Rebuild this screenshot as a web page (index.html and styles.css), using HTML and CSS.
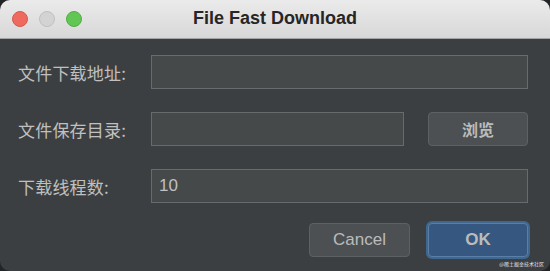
FILE: index.html
```html
<!DOCTYPE html>
<html lang="zh-CN">
<head>
    <meta charset="UTF-8">
    <meta name="viewport" content="width=device-width, initial-scale=1.0">
    <title>File Fast Download</title>
    <link rel="stylesheet" href="styles.css">
</head>
<body>
    <div class="window">
        <div class="titlebar">
            <div class="lights">
                <span class="light close"></span>
                <span class="light min"></span>
                <span class="light max"></span>
            </div>
            <div class="title">File Fast Download</div>
        </div>

        <div class="content">
            <div class="row">
                <label class="label" for="url">文件下载地址:</label>
                <input class="field" id="url" type="text">
            </div>
            <div class="row">
                <label class="label" for="dir">文件保存目录:</label>
                <div class="field-group">
                    <input class="field" id="dir" type="text">
                    <button class="btn browse">浏览</button>
                </div>
            </div>
            <div class="row">
                <label class="label" for="threads">下载线程数:</label>
                <input class="field" id="threads" type="text" value="10">
            </div>

            <div class="actions">
                <button class="btn cancel">Cancel</button>
                <button class="btn ok">OK</button>
            </div>
        </div>

        <div class="watermark">@稀土掘金技术社区</div>
    </div>
</body>
</html>
```

FILE: styles.css
```css
body {
    margin: 0;
    padding: 0;
    background-color: #232425;
    font-family: "Liberation Sans", Arial, "Noto Sans CJK SC", sans-serif;
}

.window {
    position: relative;
    width: 550px;
    height: 271px;
    display: flex;
    flex-direction: column;
    background-color: #3c3f41;
    border-radius: 10px;
    overflow: hidden;
}

.titlebar {
    position: relative;
    height: 38px;
    flex-shrink: 0;
    display: flex;
    align-items: center;
    justify-content: center;
    background: linear-gradient(#ebebeb, #d8d8d8);
    border-bottom: 1px solid #a3a3a3;
}

.lights {
    position: absolute;
    left: 12px;
    top: 11px;
    display: flex;
    gap: 11px;
}

.light {
    width: 16px;
    height: 16px;
    border-radius: 50%;
    box-sizing: border-box;
}

.light.close {
    background-color: #ee6a5f;
    border: 1px solid #d9574d;
}

.light.min {
    background-color: #d3d3d3;
    border: 1px solid #c0c0c0;
}

.light.max {
    background-color: #62c655;
    border: 1px solid #52ad45;
}

.title {
    font-size: 18px;
    font-weight: bold;
    color: #262626;
    margin-top: -1px;
}

.content {
    flex: 1;
    display: flex;
    flex-direction: column;
    gap: 23px;
    padding: 16px 22px 0 18px;
}

.row {
    display: flex;
    align-items: center;
    height: 34px;
}

.label {
    width: 133px;
    flex-shrink: 0;
    font-family: "Noto Sans CJK SC", sans-serif;
    font-size: 17px;
    letter-spacing: 0.2px;
    color: #c0c0c0;
}

.field {
    flex: 1;
    height: 34px;
    box-sizing: border-box;
    background-color: #45494a;
    border: 1px solid #686b6d;
    padding: 0 7px;
    font-family: "Liberation Sans", Arial, sans-serif;
    font-size: 17px;
    color: #c0c0c0;
    outline: none;
}

.field-group {
    flex: 1;
    display: flex;
    gap: 24px;
}

.btn {
    width: 100px;
    height: 34px;
    box-sizing: border-box;
    background-color: #4c5052;
    border: 1px solid #5e6163;
    border-radius: 4px;
    color: #bbbbbb;
    font-family: "Liberation Sans", Arial, sans-serif;
    font-size: 17px;
    padding: 0;
}

.btn.browse {
    font-family: "Noto Sans CJK SC", sans-serif;
    font-size: 16px;
    font-weight: bold;
}

.actions {
    display: flex;
    justify-content: flex-end;
    gap: 18px;
    margin-top: -3px;
}

.btn.cancel {
    width: 101px;
}

.btn.ok {
    background-color: #365880;
    border: 1px solid #5a7ea6;
    box-shadow: 0 0 0 2px #3f6890;
    font-weight: bold;
}

.watermark {
    position: absolute;
    right: 6px;
    bottom: 4px;
    font-family: "Noto Sans CJK SC", sans-serif;
    font-size: 5px;
    color: #e6e6e6;
}
```
